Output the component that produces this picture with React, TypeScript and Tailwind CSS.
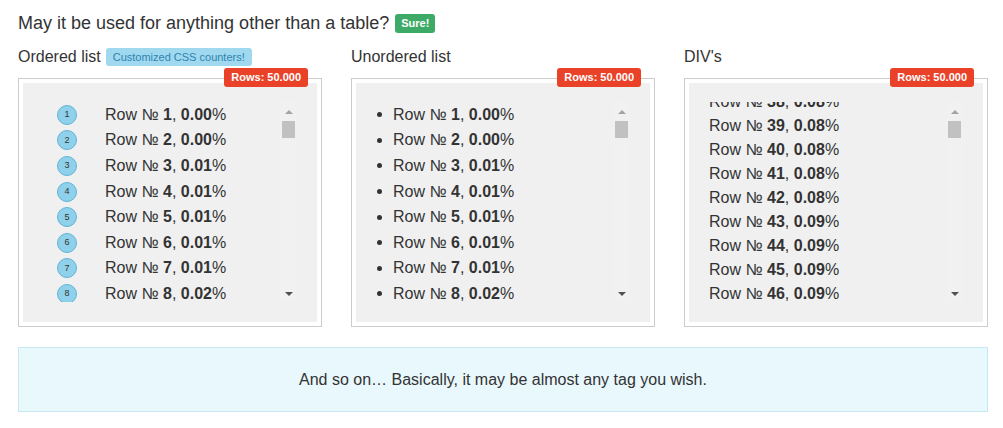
import React from 'react';

const pct = (n: number) => ((n / 50000) * 100).toFixed(2);

const RowText: React.FC<{ n: number }> = ({ n }) => (
  <span className="whitespace-nowrap">
    Row № <b className="font-bold">{n}</b>, <b className="font-bold">{pct(n)}</b>%
  </span>
);

// fake old-style scrollbar, the thumb barely moves with 50.000 rows
const Scrollbar: React.FC = () => (
  <div className="absolute right-0 top-0 h-full w-[17px] bg-[#f1f1f1]">
    <div className="flex h-[19px] items-center justify-center">
      <div className="h-0 w-0 border-x-[4px] border-b-[4px] border-x-transparent border-b-[#a3a3a3]" />
    </div>
    <div className="mx-[2px] h-[17px] w-[13px] bg-[#c1c1c1]" />
    <div className="absolute bottom-0 left-0 flex h-[17px] w-full items-center justify-center">
      <div className="h-0 w-0 border-x-[4px] border-t-[4px] border-x-transparent border-t-[#505050]" />
    </div>
  </div>
);

const Box: React.FC<{ children: React.ReactNode }> = ({ children }) => (
  <div className="relative mt-[9px] border border-[#cccccc] p-[4px]">
    <span className="absolute -top-[11px] right-[13px] rounded-[3px] bg-[#ea4228] px-[7px] py-[3px] text-[11px] font-bold leading-[13px] text-white">
      Rows: 50.000
    </span>
    <div className="h-[239px] bg-[#f0f0f0] px-[20px] pt-[19px]">
      <div className="relative h-[200px] overflow-hidden">
        {children}
        <Scrollbar />
      </div>
    </div>
  </div>
);

const rows = [1, 2, 3, 4, 5, 6, 7, 8];
const divRows = [38, 39, 40, 41, 42, 43, 44, 45, 46, 47];

export default function App() {
  return (
    <div className="min-h-screen bg-white px-[18px] pt-[11px] font-['Liberation_Sans',Arial,sans-serif] text-[#333333]">
      <div className="flex w-[970px] items-center gap-[6px] text-[18px] leading-[24px]">
        <span>May it be used for anything other than a table?</span>
        <span className="rounded-[3px] bg-[#3daa68] px-[6px] py-[3px] text-[11px] font-bold leading-[13px] text-white">
          Sure!
        </span>
      </div>

      <div className="mt-[10px] grid w-[970px] grid-cols-3 gap-[29px]">
        <div>
          <div className="flex items-center gap-[5px] text-[16px] leading-[24px]">
            <span>Ordered list</span>
            <span className="rounded-[3px] bg-[#a0d8ef] px-[7px] py-[3px] text-[11px] leading-[12px] text-[#2d84b0]">
              Customized CSS counters!
            </span>
          </div>
          <Box>
            <ol className="text-[16px]">
              {rows.map((n) => (
                <li key={n} className="flex h-[25.6px] items-center">
                  <span className="ml-[14px] mr-[28px] flex h-[20px] w-[20px] shrink-0 items-center justify-center rounded-full border border-[#5fb4d6] bg-[#8fd0ea] text-[9px] leading-none text-[#333]">
                    {n}
                  </span>
                  <RowText n={n} />
                </li>
              ))}
            </ol>
          </Box>
        </div>

        <div>
          <div className="text-[16px] leading-[24px]">Unordered list</div>
          <Box>
            <ul className="text-[16px]">
              {rows.map((n) => (
                <li key={n} className="flex h-[25.6px] items-center">
                  <span className="ml-[1px] mr-[11px] h-[5px] w-[5px] shrink-0 rounded-full bg-[#333]" />
                  <RowText n={n} />
                </li>
              ))}
            </ul>
          </Box>
        </div>

        <div>
          <div className="text-[16px] leading-[24px]">DIV's</div>
          <Box>
            <div className="-mt-[12px] text-[16px]">
              {divRows.map((n) => (
                <div key={n} className="flex h-[24px] items-center">
                  <RowText n={n} />
                </div>
              ))}
            </div>
          </Box>
        </div>
      </div>

      <div className="mt-[20px] flex h-[65px] w-[970px] items-center justify-center border border-[#c6eaf4] bg-[#e9f8fd] text-[16px]">
        And so on… Basically, it may be almost any tag you wish.
      </div>
    </div>
  );
}
